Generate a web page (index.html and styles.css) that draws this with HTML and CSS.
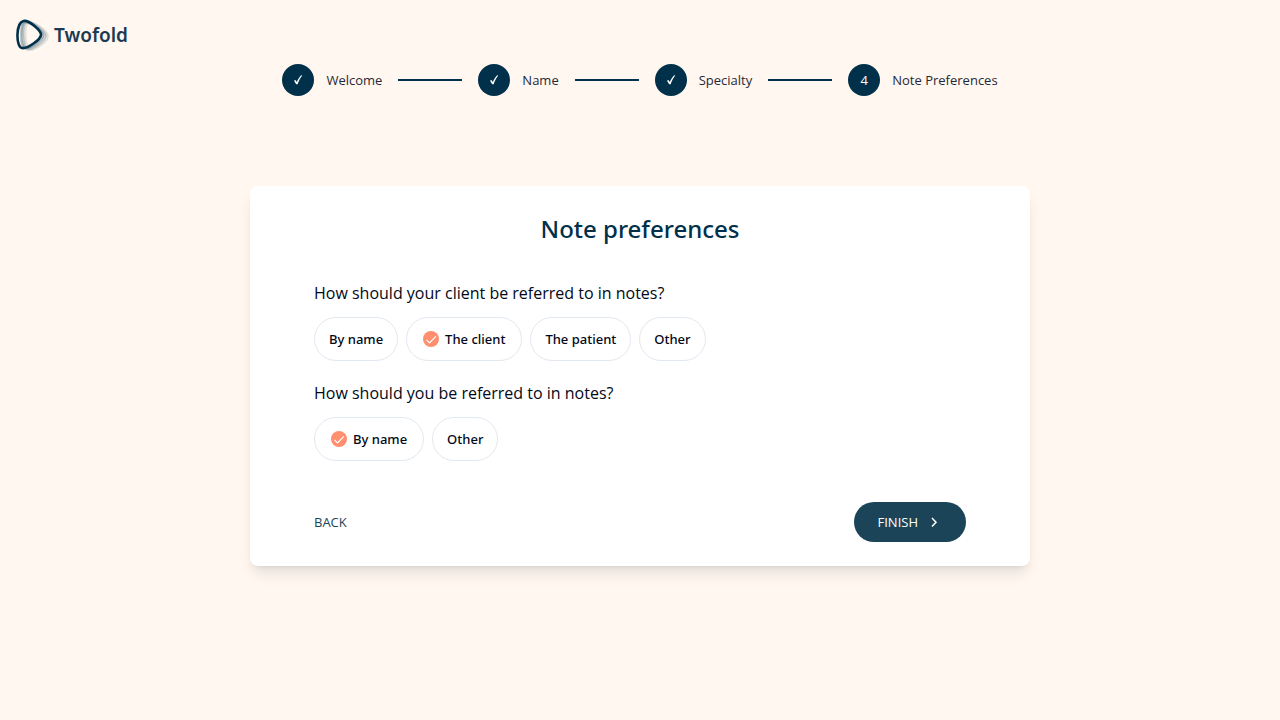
FILE: index.html
```html
<!DOCTYPE html>
<html lang="en">
<head>
<meta charset="utf-8">
<meta name="viewport" content="width=device-width, initial-scale=1">
<title>Twofold – Note preferences</title>
<link rel="stylesheet" href="styles.css">
</head>
<body>
<header class="header">
  <a class="brand" href="#">
    <svg class="brand-mark" viewBox="0 0 34 32" aria-hidden="true">
      <g fill="none" stroke="#00304a">
        <path d="M12 4C18 3 32 13 31 18C30 23 18 31 13 30C8 29 7 5 12 4Z" stroke-width="3.500" opacity=".12"/>
        <path d="M10 3C16 2 30 13 29 17C28 22 16 31 11 30C6 29 5 4 10 3Z" stroke-width="3" opacity=".18"/>
        <path d="M9 3C15 2 28 13 27 17C26 21 14 30 9 29C4 28 4 4 9 3Z" stroke-width="2.500" opacity=".28"/>
        <path d="M7.500 2C13 1 25.500 11.500 25 16C24.500 20.500 12 30 6 29C-.3 28-.3 3.500 7.500 2Z" stroke-width="2.600"/>
      </g>
    </svg>
    <span class="brand-name">Twofold</span>
  </a>
</header>
<ol class="steps">
  <li class="step"><span class="step-dot"><svg class="step-check" viewBox="0 0 12 12" role="img" aria-label="Completed"><path d="M2 6.800L3.400 6L4.800 8C5.800 5.500 7.300 3.200 9.200 1.200L10.200 1.500C8.200 4 6.900 6.800 5.600 10.200L4.200 10.200Z"/></svg></span><span>Welcome</span></li>
  <li class="step"><span class="step-dot"><svg class="step-check" viewBox="0 0 12 12" role="img" aria-label="Completed"><path d="M2 6.800L3.400 6L4.800 8C5.800 5.500 7.300 3.200 9.200 1.200L10.200 1.500C8.200 4 6.900 6.800 5.600 10.200L4.200 10.200Z"/></svg></span><span>Name</span></li>
  <li class="step"><span class="step-dot"><svg class="step-check" viewBox="0 0 12 12" role="img" aria-label="Completed"><path d="M2 6.800L3.400 6L4.800 8C5.800 5.500 7.300 3.200 9.200 1.200L10.200 1.500C8.200 4 6.900 6.800 5.600 10.200L4.200 10.200Z"/></svg></span><span>Specialty</span></li>
  <li class="step" aria-current="step"><span class="step-dot">4</span><span>Note Preferences</span></li>
</ol>
<main class="main">
  <form class="card">
    <h1 class="title">Note preferences</h1>
    <fieldset class="question">
      <legend class="prompt">How should your client be referred to in notes?</legend>
      <div class="options">
        <label class="option"><input class="radio" type="radio" name="client">By name</label>
        <label class="option"><input class="radio" type="radio" name="client" checked><svg class="tick" viewBox="0 0 16 16" aria-hidden="true"><circle cx="8" cy="8" r="8"/><path d="M3.500 8.800L6.500 11.800L12.800 5.300"/></svg>The client</label>
        <label class="option"><input class="radio" type="radio" name="client">The patient</label>
        <label class="option"><input class="radio" type="radio" name="client">Other</label>
      </div>
    </fieldset>
    <fieldset class="question">
      <legend class="prompt">How should you be referred to in notes?</legend>
      <div class="options">
        <label class="option"><input class="radio" type="radio" name="clinician" checked><svg class="tick" viewBox="0 0 16 16" aria-hidden="true"><circle cx="8" cy="8" r="8"/><path d="M3.500 8.800L6.500 11.800L12.800 5.300"/></svg>By name</label>
        <label class="option"><input class="radio" type="radio" name="clinician">Other</label>
      </div>
    </fieldset>
    <div class="actions">
      <button class="back" type="button">BACK</button>
      <button class="finish" type="button">FINISH<svg class="chevron" viewBox="0 0 16 16" aria-hidden="true"><path d="M6 4L10 8.200L6 12.400"/></svg></button>
    </div>
  </form>
</main>
</body>
</html>
```
FILE: styles.css
```css
* {
  box-sizing: border-box;
}

body {
  margin: 0;
  min-height: 100vh;
  background: #fff7f0;
  color: #020817;
  font-family: "Open Sans", "Noto Sans", sans-serif;
  font-size: 13px;
  line-height: 18px;
}

.header {
  display: flex;
  padding: 19px 16px 0;
}

.brand {
  display: flex;
  align-items: center;
  gap: 4px;
  height: 32px;
  color: #1c3a52;
  text-decoration: none;
}

.brand-mark {
  width: 34px;
  height: 32px;
}

.brand-name {
  font-family: "Noto Sans", sans-serif;
  font-size: 19px;
  font-weight: 600;
}

.steps {
  display: flex;
  justify-content: center;
  gap: 16px;
  margin: 0;
  padding: 13px 16px 0;
  list-style: none;
  color: #1f2937;
}

.step {
  display: flex;
  align-items: center;
  gap: 12px;
}

.step:not(:last-child)::after {
  content: "";
  width: 64px;
  height: 2px;
  margin-left: 4px;
  background: #00304a;
}

.step-dot {
  display: grid;
  place-items: center;
  width: 32px;
  height: 32px;
  border-radius: 50%;
  background: #00304a;
  color: #fff;
}

.step-check {
  width: 12px;
  height: 12px;
  fill: #fff;
}

.main {
  padding: 90px 16px 32px;
}

.card {
  max-width: 780px;
  margin: 0 auto;
  padding: 24px 64px;
  border-radius: 8px;
  background: #fff;
  box-shadow: 0 10px 15px -3px rgb(0 0 0 / 10%), 0 4px 6px -4px rgb(0 0 0 / 10%);
}

.title {
  margin: 0 0 33px;
  color: #00304a;
  font-family: "Noto Sans", sans-serif;
  font-size: 24px;
  font-weight: 500;
  line-height: 38px;
  text-align: center;
}

.question {
  min-width: 0;
  margin: 0 0 20px;
  padding: 0;
  border: 0;
}

.prompt {
  padding: 0;
  margin-bottom: 12px;
  font-size: 16px;
  line-height: 24px;
}

.options {
  display: flex;
  flex-wrap: wrap;
  gap: 8px;
}

.option {
  position: relative;
  display: flex;
  align-items: center;
  gap: 6px;
  height: 44px;
  padding: 0 14px;
  border: 1px solid #e2e8f0;
  border-radius: 22px;
  font-family: "Noto Sans", sans-serif;
  font-weight: 500;
  cursor: pointer;
}

.option:has(.tick) {
  padding: 0 16px;
}

.radio {
  position: absolute;
  inset: 0;
  margin: 0;
  opacity: 0;
}

.tick {
  width: 16px;
  height: 16px;
}

.tick circle {
  fill: #ff8f6f;
}

.tick path {
  fill: none;
  stroke: #fff;
  stroke-width: 1.2;
}

.actions {
  display: flex;
  align-items: center;
  justify-content: space-between;
  padding-top: 21px;
}

.back,
.finish {
  height: 40px;
  border: 0;
  font: inherit;
  cursor: pointer;
}

.back {
  padding: 0;
  background: none;
  color: #1b4459;
}

.finish {
  display: flex;
  align-items: center;
  gap: 8px;
  padding: 0 24px;
  border-radius: 20px;
  background: #1b4459;
  color: #fff;
}

.chevron {
  width: 16px;
  height: 16px;
  fill: none;
  stroke: #fff;
  stroke-width: 1.5;
}
```
